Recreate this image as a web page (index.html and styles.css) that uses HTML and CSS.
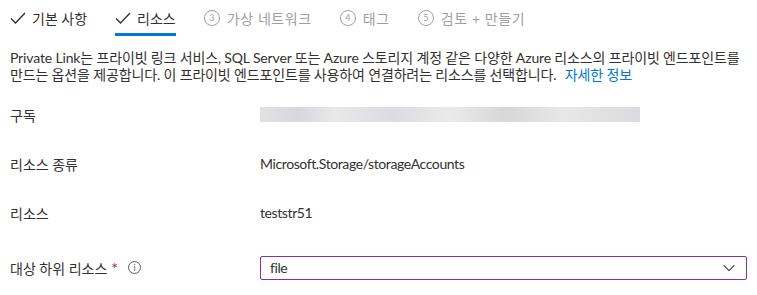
FILE: index.html
```html
<!DOCTYPE html>
<html lang="ko">
<head>
  <meta charset="UTF-8" />
  <title>프라이빗 엔드포인트 만들기</title>
  <link rel="stylesheet" href="styles.css">
</head>
<body>
  <nav class="tabs">
    <div class="tab done">
      <svg class="check" viewBox="0 0 16 16" width="16" height="16"><path d="M1 8.5 L5.5 13 L15 3" /></svg>
      <span>기본 사항</span>
    </div>
    <div class="tab done active">
      <svg class="check" viewBox="0 0 16 16" width="16" height="16"><path d="M1 8.5 L5.5 13 L15 3" /></svg>
      <span>리소스</span>
    </div>
    <div class="tab todo">
      <span class="step">3</span>
      <span>가상 네트워크</span>
    </div>
    <div class="tab todo">
      <span class="step">4</span>
      <span>태그</span>
    </div>
    <div class="tab todo">
      <span class="step">5</span>
      <span>검토 + 만들기</span>
    </div>
  </nav>

  <p class="intro">
    Private Link는 프라이빗 링크 서비스, SQL Server 또는 Azure 스토리지 계정 같은 다양한 Azure 리소스의 프라이빗 엔드포인트를<br>
    만드는 옵션을 제공합니다. 이 프라이빗 엔드포인트를 사용하여 연결하려는 리소스를 선택합니다. <a href="#">자세한 정보</a>
  </p>

  <div class="form">
    <div class="row">
      <div class="label">구독</div>
      <div class="value"><div class="blurred"></div></div>
    </div>
    <div class="row">
      <div class="label">리소스 종류</div>
      <div class="value">Microsoft.Storage/storageAccounts</div>
    </div>
    <div class="row">
      <div class="label">리소스</div>
      <div class="value">teststr51</div>
    </div>
    <div class="row last">
      <div class="label">대상 하위 리소스 <span class="req">*</span> <span class="info">i</span></div>
      <div class="value">
        <div class="select">
          <span>file</span>
          <svg viewBox="0 0 16 16" width="14" height="14"><path d="M2 5 L8 11 L14 5" /></svg>
        </div>
      </div>
    </div>
  </div>
</body>
</html>
```

FILE: styles.css
```css
body {
  margin: 0;
  padding: 0 10px;
  font-family: Lato, "Noto Sans CJK KR", sans-serif;
  font-size: 14px;
  color: #323130;
  background: white;
}

.tabs {
  display: flex;
  align-items: stretch;
  height: 36px;
  gap: 28px;
}

.tab {
  display: flex;
  align-items: center;
  gap: 6px;
  font-size: 14px;
  border-bottom: 3px solid transparent;
  box-sizing: border-box;
  padding-top: 2px;
}

.tab.active {
  border-bottom-color: #0078d4;
}

.tab.todo {
  color: #a19f9d;
  gap: 7px;
  letter-spacing: 0.6px;
}

.check path {
  fill: none;
  stroke: #323130;
  stroke-width: 1.4;
}

.step {
  display: inline-flex;
  align-items: center;
  justify-content: center;
  width: 14px;
  height: 14px;
  border: 1px solid #a19f9d;
  border-radius: 50%;
  font-size: 9px;
  line-height: 1;
  letter-spacing: 0;
}

.intro {
  margin: 13px 0 0;
  line-height: 17px;
  white-space: nowrap;
  letter-spacing: -0.15px;
}

.intro a {
  color: #0078d4;
  text-decoration: none;
  margin-left: 5px;
}

.form {
  margin-top: 7px;
}

.row {
  display: flex;
  align-items: center;
  height: 49px;
}

.row.last {
  height: 55px;
  padding-top: 6px;
  box-sizing: border-box;
}

.label {
  width: 250px;
  display: flex;
  align-items: center;
}

.req {
  color: #a4262c;
  font-size: 16px;
  line-height: 1;
  margin-left: 4px;
}

.info {
  display: inline-flex;
  align-items: center;
  justify-content: center;
  width: 11px;
  height: 11px;
  border: 1px solid #605e5c;
  border-radius: 50%;
  font-size: 9px;
  color: #605e5c;
  margin-left: 10px;
}

.value {
  flex: 1;
  letter-spacing: -0.4px;
}

.blurred {
  width: 380px;
  height: 15px;
  background: linear-gradient(90deg, #ddd9de 0%, #cfcdd4 10%, #e3e2e5 20%, #d4d2d8 35%, #e5e4e6 50%, #cdcdd0 65%, #e2e1e3 80%, #d2d1d6 100%);
  opacity: 0.8;
}

.select {
  display: flex;
  align-items: center;
  justify-content: space-between;
  height: 24px;
  box-sizing: border-box;
  border: 1px solid #8a2da5;
  border-radius: 2px;
  padding: 0 10px 0 9px;
}

.select path {
  fill: none;
  stroke: #323130;
  stroke-width: 1.2;
}
```
